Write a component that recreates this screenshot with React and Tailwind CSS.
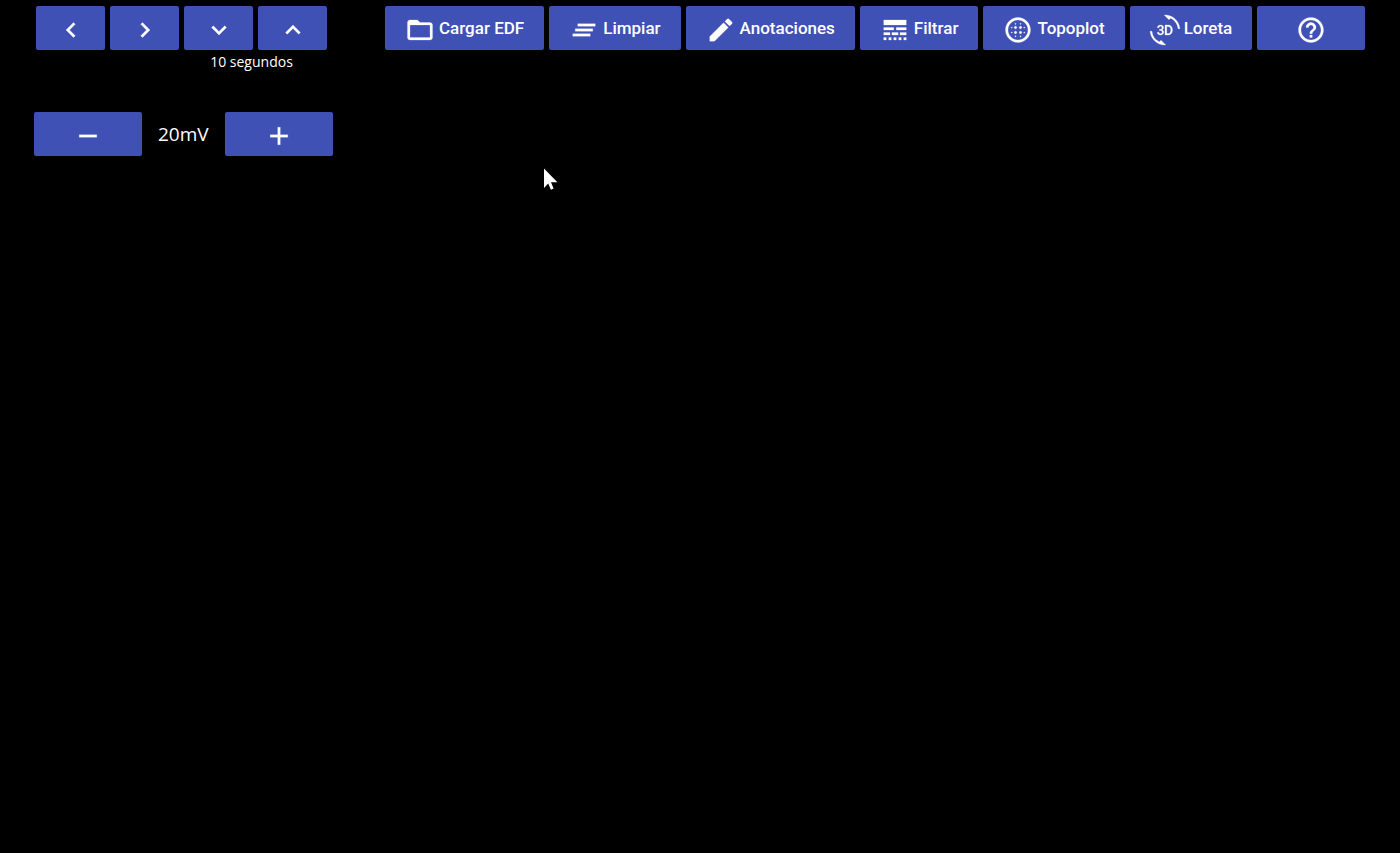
import {
  MdKeyboardArrowLeft,
  MdKeyboardArrowRight,
  MdKeyboardArrowDown,
  MdKeyboardArrowUp,
  MdFolderOpen,
  MdClearAll,
  MdEdit,
  MdLineStyle,
  MdBlurCircular,
  Md3dRotation,
  MdHelpOutline,
  MdRemove,
  MdAdd,
} from "react-icons/md";

const base =
  "flex h-11 items-center justify-center rounded-xs bg-[#3f51b5] text-white hover:bg-[#4a5cc0]";

const iconClass =
  "mt-[3px] size-[30px] shrink-0 overflow-visible [&>path:not([fill=none])]:stroke-current [&>path:not([fill=none])]:stroke-[0.2]";

function IconButton({ icon: Icon, label, className }) {
  return (
    <button type="button" aria-label={label} className={`${base} ${className}`}>
      <Icon className={iconClass} strokeWidth="0" stroke="none" aria-hidden="true" />
    </button>
  );
}

function ToolButton({ icon: Icon, children }) {
  return (
    <button type="button" className={`${base} gap-1 px-5`}>
      <Icon className={iconClass} strokeWidth="0" stroke="none" aria-hidden="true" />
      <span className="font-[Roboto,sans-serif] text-[17px] leading-6 font-medium whitespace-nowrap">
        {children}
      </span>
    </button>
  );
}

function Pointer() {
  return (
    <svg
      className="pointer-events-none absolute top-[168px] left-[543px] h-6 w-4"
      viewBox="0 0 16 24"
      aria-hidden="true"
    >
      <path d="M1 0.5V20L5.2 15.6L7.9 21.8L10.6 20.6L8 14.2H14.4Z" fill="#fff" />
    </svg>
  );
}

export default function App() {
  return (
    <main className="relative min-h-screen bg-black font-['Open_Sans','Noto_Sans',sans-serif] text-white">
      <header className="flex items-start gap-[58px] pt-1.5 pl-9">
        <div className="grid grid-cols-[repeat(4,69px)] gap-x-[5px]">
          <IconButton icon={MdKeyboardArrowLeft} label="Anterior" className="w-full" />
          <IconButton icon={MdKeyboardArrowRight} label="Siguiente" className="w-full" />
          <IconButton icon={MdKeyboardArrowDown} label="Reducir tiempo" className="w-full" />
          <IconButton icon={MdKeyboardArrowUp} label="Aumentar tiempo" className="w-full" />
          <p className="col-span-2 col-start-3 pt-0.5 pr-2 text-center text-[14px] leading-5">
            10 segundos
          </p>
        </div>
        <nav className="flex gap-[5px]">
          <ToolButton icon={MdFolderOpen}>Cargar EDF</ToolButton>
          <ToolButton icon={MdClearAll}>Limpiar</ToolButton>
          <ToolButton icon={MdEdit}>Anotaciones</ToolButton>
          <ToolButton icon={MdLineStyle}>Filtrar</ToolButton>
          <ToolButton icon={MdBlurCircular}>Topoplot</ToolButton>
          <ToolButton icon={Md3dRotation}>Loreta</ToolButton>
          <IconButton icon={MdHelpOutline} label="Ayuda" className="w-27" />
        </nav>
      </header>
      <section className="flex items-center gap-4 pt-10 pl-[34px]">
        <IconButton icon={MdRemove} label="Reducir amplitud" className="w-27" />
        <span className="text-[19px] leading-6">20mV</span>
        <IconButton icon={MdAdd} label="Aumentar amplitud" className="w-27" />
      </section>
      <Pointer />
    </main>
  );
}
